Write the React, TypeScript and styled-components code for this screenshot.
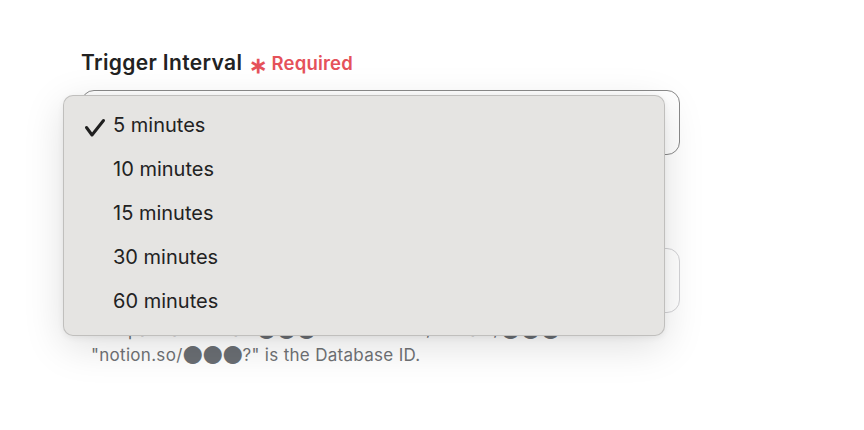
import React from "react";
import styled, { createGlobalStyle } from "styled-components";

const Global = createGlobalStyle`
  html, body { margin: 0; padding: 0; background: #ffffff; }
  body { font-family: Inter, "Noto Sans", sans-serif; -webkit-font-smoothing: antialiased; }
`;

const Page = styled.div`
  position: relative;
  width: 864px;
  height: 430px;
  padding: 50px 0 0 81px;
  box-sizing: border-box;
`;

const Form = styled.div`
  width: 599px;
  display: flex;
  flex-direction: column;
`;

const Field = styled.div<{ $gap?: number }>`
  display: flex;
  flex-direction: column;
  margin-bottom: ${(p) => p.$gap ?? 0}px;
`;

const LabelRow = styled.div`
  display: flex;
  align-items: baseline;
  height: 26px;
  line-height: 26px;
  margin-bottom: 14px;
  white-space: nowrap;
`;

const Label = styled.span`
  font-size: 21px;
  font-weight: 600;
  color: #222222;
  letter-spacing: 0.35px;
`;

const Req = styled.span`
  font-size: 18.5px;
  font-weight: 600;
  color: #e5525a;
  display: inline-flex;
  align-items: baseline;
  margin-left: 7px;
  letter-spacing: 0.2px;
`;

const Star = styled.span`
  font-size: 22px;
  line-height: 1;
  position: relative;
  top: 3px;
  margin-right: 4px;
`;

const Box = styled.div<{ $dark?: boolean }>`
  height: 65px;
  border: 1px solid ${(p) => (p.$dark ? "#8a8a8a" : "#d3d3d6")};
  border-radius: 13px;
  box-sizing: border-box;
  background: #ffffff;
`;

const Helper = styled.p`
  margin: 5px 0 0 10px;
  font-size: 17px;
  line-height: 25px;
  color: #707275;
  letter-spacing: 0.3px;
  white-space: nowrap;
`;

const Dots = styled.span`
  font-family: "DejaVu Sans", sans-serif;
  font-size: 23.5px;
  line-height: 0;
  color: #6a6e73;
  letter-spacing: -0.5px;
`;

const Menu = styled.ul`
  position: absolute;
  left: 63px;
  top: 95px;
  width: 602px;
  height: 241px;
  margin: 0;
  padding: 7px 0 0 0;
  box-sizing: border-box;
  list-style: none;
  background: #e5e4e2;
  border: 1px solid rgba(0, 0, 0, 0.16);
  border-radius: 10px;
  box-shadow: 0 10px 40px rgba(0, 0, 0, 0.13), 0 2px 6px rgba(0, 0, 0, 0.06);
`;

const Item = styled.li`
  height: 44px;
  display: flex;
  align-items: center;
  padding-left: 20px;
  font-size: 20px;
  color: #222222;
`;

const CheckSlot = styled.span`
  width: 29px;
  height: 20px;
  display: inline-flex;
  align-items: center;
  margin-top: 6px;
`;

const Check = () => (
  <svg width="22" height="20" viewBox="0 0 22 20">
    <path
      d="M2.5 9.5 L8 17 L19.5 2.5"
      fill="none"
      stroke="#1f1f1f"
      strokeWidth="3"
      strokeLinecap="round"
      strokeLinejoin="round"
    />
  </svg>
);

const options = ["5 minutes", "10 minutes", "15 minutes", "30 minutes", "60 minutes"];

export default function App() {
  return (
    <Page>
      <Global />
      <Form>
        <Field $gap={53}>
          <LabelRow>
            <Label>Trigger Interval</Label>
            <Req>
              <Star>∗</Star>Required
            </Req>
          </LabelRow>
          <Box $dark />
        </Field>
        <Field>
          <LabelRow>
            <Label>Database ID</Label>
          </LabelRow>
          <Box />
          <Helper>
            The part labeled as <Dots>●●●</Dots> in "notion.so/domain/<Dots>●●●</Dots>?" or
            <br />
            "notion.so/<Dots>●●●</Dots>?" is the Database ID.
          </Helper>
        </Field>
      </Form>
      <Menu>
        {options.map((o, i) => (
          <Item key={o}>
            <CheckSlot>{i === 0 ? <Check /> : null}</CheckSlot>
            {o}
          </Item>
        ))}
      </Menu>
    </Page>
  );
}
